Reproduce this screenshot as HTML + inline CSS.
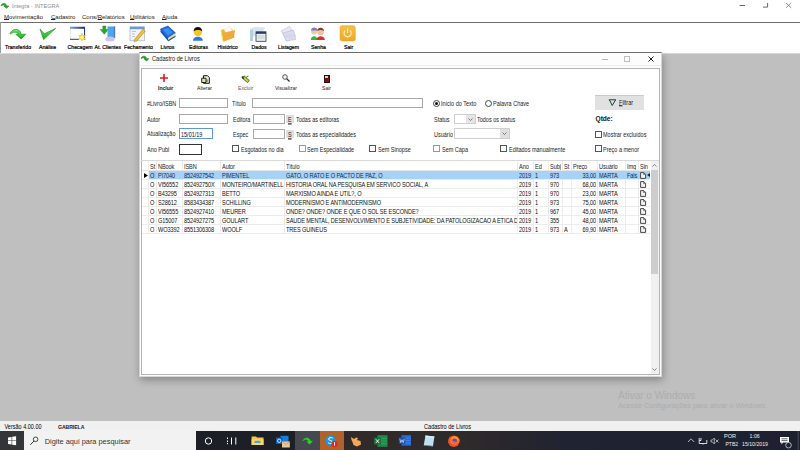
<!DOCTYPE html>
<html><head><meta charset="utf-8">
<style>
*{margin:0;padding:0;box-sizing:border-box}
html,body{width:800px;height:450px;overflow:hidden}
body{position:relative;background:#bfbfbf;font-family:"Liberation Sans",sans-serif;font-size:6px;color:#000}
.a{position:absolute}
.t{position:absolute;white-space:nowrap;line-height:1}
.u{text-decoration:underline;text-underline-offset:0.2px}
.f{transform:scaleY(1.15);transform-origin:0 50%}
.tb{font-weight:normal;font-size:5.2px;color:#000;-webkit-text-stroke:0.2px #000;transform:scaleY(1.1);transform-origin:0 50%}
.chk{position:absolute;width:7px;height:7px;border:1px solid #555;background:#fff}
.box{position:absolute;border:1px solid #a8a8a8;background:#fff}
.g{position:absolute;line-height:9px;height:9px;white-space:nowrap;overflow:hidden;font-size:5.6px;letter-spacing:-0.1px;color:#222;transform:scaleY(1.2);transform-origin:0 0}
</style></head><body>

<!-- ===== main window chrome ===== -->
<div class="a" style="left:0;top:0;width:800px;height:54px;background:#fff"></div>
<!-- title icon -->
<svg class="a" style="left:0;top:0" width="12" height="11" viewBox="0 0 12 11"><g transform="translate(-4,-11.2) scale(0.5)"><path d="M10,33.5 C11.5,29.5 17,27.5 20.5,31.8 L20.8,34.2 L25.8,34.3 L21.2,39 L15.8,34.3 L18.6,34.2 C16.5,31.8 13,31.5 10.6,34.2 Z" fill="#22b022" stroke="#0a6a0a" stroke-width="1"/></g></svg>
<div class="t" style="left:12px;top:4px;color:#8c8c8c;font-size:5.6px">Integra - INTEGRA</div>
<!-- window controls -->
<svg class="a" style="left:730px;top:0" width="70" height="12" viewBox="730 0 70 12">
<path d="M739.6,5.5 H745" stroke="#555" stroke-width="0.9"/>
<path d="M763,7.1 H767.6 V3" fill="none" stroke="#555" stroke-width="0.9"/>
<path d="M786,3 L791.2,7.9 M791.2,3 L786,7.9" stroke="#666" stroke-width="0.7"/>
</svg>
<!-- menu -->
<div class="t" style="left:4px;top:14px;color:#222"><span class="u">M</span>ovimentação</div>
<div class="t" style="left:51px;top:14px;color:#222"><span class="u">C</span>adastro</div>
<div class="t" style="left:82px;top:14px;color:#222">Cons/<span class="u">R</span>elatórios</div>
<div class="t" style="left:130px;top:14px;color:#222"><span class="u">U</span>tilitários</div>
<div class="t" style="left:162px;top:14px;color:#222"><span class="u">A</span>juda</div>

<!-- toolbar -->
<div class="a" style="left:0;top:22px;width:800px;height:1px;background:#6e6e6e"></div>
<div class="a" style="left:0;top:22px;width:1px;height:32px;background:#9a9a9a"></div>
<div class="a" style="left:0;top:53px;width:800px;height:1px;background:#d8d8d8"></div>

<!-- toolbar icons -->
<svg class="a" style="left:0;top:0" width="400" height="54" viewBox="0 0 400 54">
<defs>
<linearGradient id="gg" x1="0" y1="0" x2="0" y2="1"><stop offset="0" stop-color="#6ee86e"/><stop offset="1" stop-color="#14a814"/></linearGradient>
<linearGradient id="og" x1="0" y1="0" x2="0" y2="1"><stop offset="0" stop-color="#f6c046"/><stop offset="1" stop-color="#f0a828"/></linearGradient>
<linearGradient id="wb" x1="0" y1="0" x2="1" y2="0"><stop offset="0" stop-color="#8aa4d8"/><stop offset="1" stop-color="#102878"/></linearGradient>
</defs>
<!-- Transferir arrow -->
<path d="M10,33.5 C11.5,29.5 17,27.5 20.5,31.8 L20.8,34.2 L25.8,34.3 L21.2,39 L15.8,34.3 L18.6,34.2 C16.5,31.8 13,31.5 10.6,34.2 Z" fill="url(#gg)" stroke="#0c8a0c" stroke-width="0.6"/>
<!-- Analise check -->
<path d="M40,29 L44.3,33.8 L55.7,28.3 L43.6,39.6 Z" fill="url(#gg)" stroke="#0c8a0c" stroke-width="0.6"/>
<!-- Checagem window -->
<rect x="70.5" y="27" width="14.5" height="12.5" fill="#fff" stroke="#c8d4ee" stroke-width="0.5"/>
<rect x="70" y="26.8" width="15" height="2" fill="url(#wb)"/>
<rect x="84" y="27" width="1" height="12.5" fill="#2a3a90"/>
<rect x="70" y="38.8" width="9" height="1" fill="#2a3a90"/>
<path d="M82,33 L83,35.6 L85.8,35.2 L84,37.2 L85.8,39.3 L83,38.8 L82,41.2 L81,38.8 L78.2,39.3 L80,37.2 L78.2,35.2 L81,35.6 Z" fill="#f2dc3a" stroke="#d8b820" stroke-width="0.3"/>
<circle cx="82" cy="37.2" r="1.5" fill="#fff7a0"/>
<!-- At. Clientes -->
<path d="M100.2,29.5 L102.8,29.5 L102.8,26 L105.8,26 L105.8,29.5 L108.4,29.5 L104.3,34.2 Z" fill="#2aa82a" stroke="#117711" stroke-width="0.4"/>
<rect x="107.5" y="26.5" width="7.5" height="11.5" fill="#4aa8e8"/>
<rect x="113.8" y="26.5" width="1.4" height="11.5" fill="#5a78b8"/>
<ellipse cx="110" cy="39" rx="4.8" ry="2.5" fill="#cdc2ee"/>
<!-- Fechamento -->
<rect x="130" y="26.8" width="14.5" height="14" fill="#f2f4fa" stroke="#98a8c8" stroke-width="0.6"/>
<rect x="130" y="26.8" width="14.5" height="2.4" fill="#6a9ad8"/>
<path d="M132,31.5h4M132,34h3M132,36.5h3" stroke="#a0a0b0" stroke-width="0.6"/>
<path d="M134.5,39.5 L143,29 L145.3,31 L136.8,41 L134,41.5 Z" fill="#f2c040" stroke="#a07010" stroke-width="0.5"/>
<!-- Livros -->
<path d="M160.5,29 L168,26 L175.5,33 L168,38 Z" fill="#1e6ee0" stroke="#0a3e9a" stroke-width="0.6"/>
<path d="M163,29.5 L168,27.8 L172.5,32.5 L168,35.5 Z" fill="#3a90f0"/>
<path d="M160.5,29 L168,38 L168,41 L160.5,32 Z" fill="#1050c0"/>
<path d="M168,38 L175.5,33 L175.5,36 L168,41 Z" fill="#e8e478"/>
<path d="M168,40 L175.5,35.5 L175.5,37 L168,41.5 Z" fill="#1e5ec8"/>
<!-- Editoras person -->
<path d="M193,40.8 C193,35.5 202.8,35.5 202.8,40.8 Z" fill="#2e78d8"/>
<circle cx="197.9" cy="32" r="4.2" fill="#f6c628"/>
<path d="M193.6,31.2 C193.6,25.5 202.2,25.5 202.2,31.2 C200,29.5 196,29.5 193.6,31.2 Z" fill="#111"/>
<!-- Historico folder -->
<path d="M221,30 L225,29 L226,30 L232,28.5 L234.5,37.5 L223.5,41.4 Z" fill="#e8b830"/>
<path d="M224,29.5 L230,26.2 L233.5,33 L227,35.5 Z" fill="#fbfbf4" stroke="#d8d0b8" stroke-width="0.3"/>
<path d="M223,33 L235,30 L234,37.5 L223.5,41.4 Z" fill="#f0a838"/>
<path d="M221,30.5 L223.5,41.4 L222.5,41 L220.8,32 Z" fill="#f8d048"/>
<!-- Dados -->
<path d="M250,29 C252,27 256,26.5 260,27.5 L262,27 L265,28 L262,33 L250,38 Z" fill="#d6e4f4"/>
<rect x="250" y="30" width="3" height="11" fill="#b8cce4"/>
<rect x="256" y="31.8" width="10" height="9.5" fill="#e8ecf2" stroke="#2a3a4a" stroke-width="0.8"/>
<rect x="256" y="31.8" width="10" height="2" fill="#2a3a5a"/>
<path d="M257.5,36h7M257.5,38h7" stroke="#a0a8b8" stroke-width="0.5"/>
<!-- Listagem -->
<path d="M281,31 L289.5,26.2 L295.5,36 L287,41 Z" fill="#e8e8f6" stroke="#b4b4cc" stroke-width="0.5"/>
<path d="M283,33 L293.5,30 L295.8,39.5 L286,41 Z" fill="#dcdcf0" stroke="#b0b0c8" stroke-width="0.5"/>
<path d="M285,35h8M285.5,37h8" stroke="#c0c0dc" stroke-width="0.5"/>
<!-- Senha -->
<path d="M310.8,39.9 C310.8,35 317.5,35 317.5,39.9 Z" fill="#38b838"/>
<circle cx="314.2" cy="31.5" r="3" fill="#f0c8a0"/>
<path d="M311,30.5 C311,26.5 317.5,26.5 317.5,30.5 Z" fill="#7a7ad0"/>
<path d="M316.5,39.9 C316.5,35 324.8,35 324.8,39.9 Z" fill="#d83030"/>
<circle cx="320.6" cy="32" r="3.2" fill="#f0c0a0"/>
<path d="M317.2,31 C317.2,26.8 324,26.8 324,31 C322,29.8 319.5,29.8 317.2,31 Z" fill="#8a3a2a"/>
<!-- Sair -->
<rect x="340" y="25.7" width="15.3" height="15.2" rx="1.8" fill="url(#og)" stroke="#e0a020" stroke-width="0.5"/>
<path d="M345.3,30.5 A3.6,3.6 0 1 0 350,30.5" fill="none" stroke="#fff2c0" stroke-width="1.1"/>
<path d="M347.65,28.5 V33" stroke="#fff2c0" stroke-width="1.1"/>
</svg>

<div class="t tb" style="left:5px;top:45px">Transferido</div>
<div class="t tb" style="left:39px;top:45px">Análise</div>
<div class="t tb" style="left:67.5px;top:45px">Checagem</div>
<div class="t tb" style="left:94.5px;top:45px">At. Clientes</div>
<div class="t tb" style="left:124px;top:45px">Fechamento</div>
<div class="t tb" style="left:160.5px;top:45px">Livros</div>
<div class="t tb" style="left:189px;top:45px">Editoras</div>
<div class="t tb" style="left:217.5px;top:45px">Histórico</div>
<div class="t tb" style="left:251.5px;top:45px">Dados</div>
<div class="t tb" style="left:278px;top:45px">Listagem</div>
<div class="t tb" style="left:311px;top:45px">Senha</div>
<div class="t tb" style="left:344px;top:45px">Sair</div>

<!-- ===== status bar ===== -->
<div class="a" style="left:0;top:421px;width:800px;height:10px;background:#f0f0f0"></div>
<div class="t f" style="left:4.5px;top:425px;font-size:5.5px;color:#000">Versão 4.00.00</div>
<div class="t f" style="left:58px;top:425px;font-size:5.2px;font-weight:bold;color:#222;letter-spacing:-0.1px">GABRIELA</div>
<div class="t f" style="left:424px;top:425px;font-size:5.6px;color:#000">Cadastro de Livros</div>

<!-- watermark -->
<div class="t" style="left:618px;top:390.5px;font-size:10px;color:#adadad">Ativar o Windows</div>
<div class="t" style="left:618px;top:401.5px;font-size:7.3px;color:#adadad">Acesse Configurações para ativar o Windows.</div>

<!-- ===== taskbar ===== -->
<div class="a" style="left:0;top:431px;width:800px;height:19px;background:linear-gradient(90deg,#1b1e25 0%,#1c1f26 36%,#312a29 44%,#2f2a2b 58%,#202331 70%,#1c2030 100%)"></div>
<div class="a" style="left:0;top:431px;width:24px;height:19px;background:#333538"></div>
<div class="a" style="left:24px;top:431px;width:172px;height:19px;background:#f2f2f2"></div>
<svg class="a" style="left:0;top:431px" width="800" height="19" viewBox="0 431 800 19">
<!-- windows logo -->
<path d="M8,437.4 L11.6,436.9 V440.5 H8 Z M12.2,436.8 L16.1,436.2 V440.5 H12.2 Z M8,441.1 H11.6 V444.6 L8,444.1 Z M12.2,441.1 H16.1 V445.3 L12.2,444.7 Z" fill="#fff"/>
<!-- search -->
<circle cx="35.6" cy="439.3" r="2.3" fill="none" stroke="#222" stroke-width="0.8"/>
<path d="M34,441 L30.3,444.8" stroke="#222" stroke-width="0.9"/>
<!-- cortana -->
<circle cx="208.5" cy="441" r="3.2" fill="none" stroke="#fff" stroke-width="1"/>
<!-- task view -->
<path d="M227.5,437.5v1.5M227.5,440.5v1.5M227.5,443v1.2M231.5,437.5v7M235.8,437.5v7" stroke="#fff" stroke-width="1"/>
<!-- explorer -->
<path d="M251.6,436.5 H256 L257,437.6 H263.5 V445 H251.6 Z" fill="#f2c94c"/>
<rect x="251.6" y="439.3" width="11.9" height="5.7" fill="#f8d868"/>
<rect x="254.5" y="440.8" width="6" height="2.2" fill="#5aa0c8"/>
<!-- outlook -->
<rect x="280.5" y="435.8" width="8" height="8" fill="#1a7ed8"/>
<rect x="276" y="437.5" width="6.5" height="6.5" fill="#0f5fb8"/>
<circle cx="279.2" cy="440.8" r="1.7" fill="none" stroke="#fff" stroke-width="0.8"/>
<rect x="282" y="441.5" width="7.8" height="6" fill="#e8c898"/>
<path d="M282,441.5 L285.9,444.5 L289.8,441.5" fill="none" stroke="#b89060" stroke-width="0.6"/>
</svg>
<!-- active integra button -->
<div class="a" style="left:295px;top:431px;width:25px;height:19px;background:#45484e"></div>
<div class="a" style="left:320px;top:431px;width:24px;height:19px;background:#b0622c"></div>
<svg class="a" style="left:0;top:431px" width="800" height="19" viewBox="0 431 800 19">
<path d="M302.5,440.5 C304,437.5 308,436.5 310,439.5 L310.5,440.8 L313,441 L309.5,444.6 L306.3,441.3 L308.4,441.2 C307,439.5 304.5,439.3 303.2,441 Z" fill="#2ad42a" stroke="#119011" stroke-width="0.4"/>
<!-- skype -->
<circle cx="330.6" cy="440.5" r="5" fill="#1e9ae0"/>
<path d="M332.8,438.2 C331.2,437 328.4,437.6 328.6,439.2 C328.8,440.8 332.6,440.4 332.6,442.2 C332.6,443.8 329.6,444 328.2,442.8" fill="none" stroke="#fff" stroke-width="1"/>
<circle cx="334.5" cy="444" r="3.2" fill="#e02828"/>
<rect x="334.1" y="442.2" width="0.9" height="3.4" fill="#fff"/>
<!-- orange figure -->
<path d="M351,437 L354,439 L356,437.5 L358,438 L357,440 L360.5,441 L361,444.5 L357,446.5 L353.5,445 L352.5,442 L351.5,440 Z" fill="#f2a858"/>
<!-- excel -->
<rect x="377.5" y="435.2" width="10" height="11.6" fill="#1f8a4c"/>
<path d="M379,438.5h8M379,441h8M379,443.5h8" stroke="#33b06a" stroke-width="0.6"/>
<rect x="374" y="437.5" width="7" height="7" fill="#17703c"/>
<path d="M375.8,439.2 L379.2,443 M379.2,439.2 L375.8,443" stroke="#fff" stroke-width="0.9"/>
<!-- word -->
<rect x="401.5" y="435.2" width="9.5" height="10.4" fill="#2b6ad4"/>
<path d="M403,438h7.5M403,440.5h7.5M403,443h7.5" stroke="#4a90f0" stroke-width="0.6"/>
<rect x="398.8" y="437.3" width="6.5" height="6.5" fill="#1a4fae"/>
<path d="M399.8,438.8 L400.8,442.6 L402,439.8 L403.2,442.6 L404.2,438.8" fill="none" stroke="#fff" stroke-width="0.6"/>
<!-- notepad -->
<path d="M425.5,435.5 L434.4,436.5 L433,446 L423.8,445 Z" fill="#bfe0ee"/>
<path d="M425.5,435.5 L434.4,436.5 L434,438 L425.2,437 Z" fill="#d8eef8"/>
<path d="M423.8,445 L433,446 L432.8,446.5 L423.7,445.6Z" fill="#7ab0c8"/>
<!-- firefox -->
<circle cx="453.8" cy="441.2" r="5.8" fill="#f24e2a"/>
<circle cx="454.6" cy="440.4" r="4.2" fill="#ff9a1a"/>
<circle cx="454.6" cy="441" r="2.6" fill="#7a3fb8"/>
<path d="M449,437 C450,440 452,443 456,444 C459,444 460,441 459.5,438.5 C458.5,442 455,442.5 453,441 Z" fill="#ff6a1a"/>
<!-- tray -->
<path d="M688,442 L691,438.8 L694.2,442" fill="none" stroke="#ddd" stroke-width="0.8"/>
<path d="M699.2,437.9 V443.5 M701,437.9 V440.5 H699.2 M699.2,443.5 H706.8 V440 M703,443.5 V444.5" fill="none" stroke="#eee" stroke-width="0.9"/>
<path d="M711,440 H712.5 L714.3,438 V444 L712.5,442 H711 Z" fill="none" stroke="#ddd" stroke-width="0.7"/>
<path d="M715.5,439.5 L718.5,442.5 M718.5,439.5 L715.5,442.5" stroke="#ddd" stroke-width="0.7"/>
<!-- notifications -->
<path d="M780,437 H789 V442.5 H783 L781.5,444.5 V442.5 H780 Z" fill="#fff"/>
<path d="M781.5,438.8h6M781.5,440.6h6" stroke="#1c2030" stroke-width="0.7"/>
<circle cx="788.5" cy="445.2" r="2.8" fill="#1c2030" stroke="#eee" stroke-width="0.7"/>
<rect x="797.8" y="431" width="0.7" height="19" fill="#5a5e68"/>
</svg>
<div class="t" style="left:724px;top:433.5px;font-size:5.6px;color:#eee">POR</div>
<div class="t" style="left:725.5px;top:442px;font-size:5px;color:#eee">PTB2</div>
<div class="t" style="left:749.5px;top:433.5px;font-size:5.3px;color:#eee">1:06</div>
<div class="t" style="left:742px;top:442px;font-size:5.2px;color:#eee">15/10/2019</div>
<div class="t" style="left:44.7px;top:437.5px;font-size:7.4px;color:#333">Digite aqui para pesquisar</div>

<!-- ===== MDI child ===== -->
<div class="a" style="left:139px;top:52px;width:523px;height:325px;background:#fcfcfc;border:1px solid #d6d6d6;border-top:1px solid #6a6a6a;box-shadow:1px 3px 8px rgba(0,0,0,.3);clip-path:inset(0 -20px -20px -20px)"></div>
<div class="a" style="left:140px;top:65px;width:521px;height:1px;background:#ececec"></div>
<svg class="a" style="left:136px;top:48px" width="16" height="16" viewBox="0 0 16 16"><g transform="translate(0,-6.45) scale(0.5)"><path d="M10,33.5 C11.5,29.5 17,27.5 20.5,31.8 L20.8,34.2 L25.8,34.3 L21.2,39 L15.8,34.3 L18.6,34.2 C16.5,31.8 13,31.5 10.6,34.2 Z" fill="#22b022" stroke="#0a6a0a" stroke-width="1"/></g></svg>
<div class="t f" style="left:152px;top:57px;font-size:5.7px;color:#1a1a1a">Cadastro de Livros</div>
<div class="a" style="left:602px;top:59px;width:6px;height:1px;background:#b8b8b8"></div>
<div class="a" style="left:624px;top:56px;width:6px;height:6px;border:1px solid #c0c0c0"></div>
<svg class="a" style="left:647.5px;top:55.5px" width="6" height="6" viewBox="0 0 6 6"><path d="M0.5 0.5L5.5 5.5M5.5 0.5L0.5 5.5" stroke="#222" stroke-width="1"/></svg>
<!-- client -->
<div class="a" style="left:141px;top:68px;width:519px;height:307px;background:#fff;border:1px solid #b4b4b4"></div>
<!-- child toolbar -->
<svg class="a" style="left:160px;top:74px" width="8" height="8" viewBox="0 0 8 8"><path d="M4 0V8M0 4H8" stroke="#e01818" stroke-width="1.6"/></svg>
<svg class="a" style="left:200.5px;top:74.5px" width="9" height="9" viewBox="0 0 9 9"><path d="M2.5 0.7H6.5L8.3 2.5V8.3H2.5Z" fill="#f0f0d8" stroke="#111" stroke-width="1"/><path d="M0.7 3.2H5V7.5H0.7Z" fill="#d8e890" stroke="#111" stroke-width="0.9"/><path d="M6 4.5V7" stroke="#222" stroke-width="0.8"/></svg>
<svg class="a" style="left:241px;top:74.5px" width="9" height="8" viewBox="0 0 9 8"><path d="M1 3L3 0.8L8.3 5.5L6.5 7.5Z" fill="#c8d040" stroke="#3a4a20" stroke-width="0.8"/><path d="M0.8 1.5L3 3.5" stroke="#1a3a1a" stroke-width="1.2"/><path d="M5 2.5L7.5 1" stroke="#2a8a2a" stroke-width="1"/></svg>
<svg class="a" style="left:282px;top:74px" width="8" height="8" viewBox="0 0 8 8"><circle cx="3" cy="3" r="2.3" fill="#f4f4f4" stroke="#444" stroke-width="0.9"/><path d="M4.6 4.6L7.5 7.5" stroke="#222" stroke-width="1.2"/></svg>
<div class="a" style="left:323.5px;top:75px;width:6px;height:7.5px;background:#7a1010;border:0.7px solid #3a0a0a"></div><div class="a" style="left:325px;top:76px;width:2.5px;height:2px;background:#b8e0c8"></div>
<div class="t" style="left:158px;top:86px;font-size:5.1px;font-weight:bold;color:#111">Incluir</div>
<div class="t" style="left:197px;top:86px;font-size:5.1px;color:#111">Alterar</div>
<div class="t" style="left:238px;top:86px;font-size:5.1px;color:#5a5a5a">Excluir</div>
<div class="t" style="left:275px;top:86px;font-size:5.1px;color:#222">Visualizar</div>
<div class="t" style="left:322px;top:86px;font-size:5.1px;color:#222">Sair</div>
<!-- form -->
<div class="t f" style="left:147px;top:102px;font-size:5.5px;color:#222">#Livro/ISBN</div>
<div class="box" style="left:179px;top:98px;width:49px;height:10px"></div>
<div class="t f" style="left:232px;top:102px;font-size:5.5px;color:#222">Título</div>
<div class="box" style="left:252px;top:98px;width:171px;height:10px"></div>
<div class="a" style="left:433px;top:100px;width:7px;height:7px;border:0.8px solid #444;border-radius:50%;background:#fff"></div>
<div class="a" style="left:435px;top:102px;width:3px;height:3px;border-radius:50%;background:#111"></div>
<div class="t f" style="left:441px;top:102px;font-size:5.5px;color:#222">Início do Texto</div>
<div class="a" style="left:485px;top:100px;width:7px;height:7px;border:0.8px solid #444;border-radius:50%;background:#fff"></div>
<div class="t f" style="left:493px;top:102px;font-size:5.5px;color:#222">Palavra Chave</div>
<div class="a" style="left:595px;top:95px;width:49px;height:15px;background:#e1e1e1;border-top:1px solid #cacaca"></div>
<svg class="a" style="left:608px;top:99px" width="9" height="7" viewBox="0 0 9 7"><path d="M0.8,0.8 H8 M1.5,1 L4.2,6.5 L7.5,1" fill="none" stroke="#1c3c3c" stroke-width="1"/></svg>
<div class="t f" style="left:619px;top:101px;font-size:5.5px;color:#222"><span class="u">F</span>iltrar</div>

<div class="t f" style="left:147px;top:118px;font-size:5.5px;color:#222">Autor</div>
<div class="box" style="left:179px;top:114px;width:49px;height:10px"></div>
<div class="t f" style="left:233px;top:118px;font-size:5.5px;color:#222">Editora</div>
<div class="box" style="left:253px;top:114px;width:32px;height:10px"></div>
<div class="a" style="left:286px;top:115px;width:8px;height:8px;background:#e0e0e0"></div>
<div class="t f" style="left:288px;top:118px;font-size:5.5px;color:#222;text-decoration:underline">E</div>
<div class="t f" style="left:296px;top:118px;font-size:5.5px;color:#222">Todas as editoras</div>
<div class="t f" style="left:434px;top:118px;font-size:5.5px;color:#222">Status</div>
<div class="box" style="left:454px;top:114px;width:22px;height:10px;border-color:#cfcfcf"></div>
<div class="a" style="left:466px;top:115px;width:9px;height:8px;background:#e5e5e5"></div>
<svg class="a" style="left:468px;top:118px" width="5" height="3" viewBox="0 0 5 3"><path d="M0.5 0.5L2.5 2.5L4.5 0.5" fill="none" stroke="#555" stroke-width="0.7"/></svg>
<div class="t f" style="left:477px;top:118px;font-size:5.5px;color:#222">Todos os status</div>
<div class="t" style="left:595.5px;top:115.5px;font-size:6.6px;font-weight:bold;color:#111">Qtde:</div>

<div class="t f" style="left:147px;top:132px;font-size:5.5px;color:#222">Atualização</div>
<div class="a" style="left:179px;top:128px;width:34px;height:11px;border:1px solid #5d9ad0;background:#fff"></div>
<div class="t f" style="left:181px;top:133px;font-size:5.5px;color:#111">15/01/19</div>
<div class="t f" style="left:233px;top:133px;font-size:5.5px;color:#222">Espec</div>
<div class="box" style="left:253px;top:129px;width:32px;height:10px"></div>
<div class="a" style="left:286px;top:130px;width:8px;height:8px;background:#e0e0e0"></div>
<div class="t f" style="left:288px;top:133px;font-size:5.5px;color:#222;text-decoration:underline">S</div>
<div class="t f" style="left:296px;top:133px;font-size:5.5px;color:#222">Todas as especialidades</div>
<div class="t f" style="left:434px;top:133px;font-size:5.5px;color:#222">Usuário</div>
<div class="box" style="left:454px;top:128px;width:56px;height:11px;border-color:#cfcfcf"></div>
<div class="a" style="left:500px;top:129px;width:9px;height:9px;background:#e0e0e0"></div>
<svg class="a" style="left:502px;top:132px" width="5" height="3" viewBox="0 0 5 3"><path d="M0.5 0.5L2.5 2.5L4.5 0.5" fill="none" stroke="#555" stroke-width="0.7"/></svg>
<div class="chk" style="left:595px;top:131px"></div>
<div class="t f" style="left:603px;top:133px;font-size:5.5px;color:#222">Mostrar excluídos</div>

<div class="t f" style="left:147px;top:148px;font-size:5.5px;color:#222">Ano Publ</div>
<div class="a" style="left:179px;top:144px;width:23px;height:11px;border:1px solid #333;background:#fff"></div>
<div class="chk" style="left:232px;top:145px"></div>
<div class="t f" style="left:241px;top:148px;font-size:5.5px;color:#222">Esgotados no dia</div>
<div class="chk" style="left:299px;top:145px;border-color:#999"></div>
<div class="t f" style="left:307px;top:148px;font-size:5.5px;color:#222">Sem Especialidade</div>
<div class="chk" style="left:369px;top:145px"></div>
<div class="t f" style="left:378px;top:148px;font-size:5.5px;color:#222">Sem Sinopse</div>
<div class="chk" style="left:433px;top:145px;border-color:#999"></div>
<div class="t f" style="left:442px;top:148px;font-size:5.5px;color:#222">Sem Capa</div>
<div class="chk" style="left:500px;top:145px"></div>
<div class="t f" style="left:509px;top:148px;font-size:5.5px;color:#222">Editados manualmente</div>
<div class="chk" style="left:595px;top:145px"></div>
<div class="t f" style="left:603px;top:148px;font-size:5.5px;color:#222">Preço a menor</div>

<!-- grid -->
<div class="a" style="left:650.5px;top:161px;width:8.5px;height:213px;background:#f0f0f0"></div>
<div class="a" style="left:651px;top:170px;width:7px;height:104px;background:#cdcdcd"></div>
<svg class="a" style="left:652px;top:164px" width="5" height="3" viewBox="0 0 5 3"><path d="M0.5 2.5L2.5 0.5L4.5 2.5" fill="none" stroke="#555" stroke-width="0.7"/></svg>
<svg class="a" style="left:652px;top:368px" width="5" height="3" viewBox="0 0 5 3"><path d="M0.5 0.5L2.5 2.5L4.5 0.5" fill="none" stroke="#555" stroke-width="0.7"/></svg>
<div class="a" style="left:141px;top:160px;width:518px;height:1px;background:#d9d9d9"></div>
<div class="a" style="left:142px;top:161px;width:508px;height:9px;background:#fff"></div>
<div class="a" style="left:148px;top:161px;width:1px;height:72px;background:#ececec"></div>
<div class="g" style="left:150px;top:161.5px;width:6px;color:#222">St</div>
<div class="a" style="left:156px;top:161px;width:1px;height:72px;background:#ececec"></div>
<div class="g" style="left:158px;top:161.5px;width:24px;color:#222">NBook</div>
<div class="a" style="left:182px;top:161px;width:1px;height:72px;background:#ececec"></div>
<div class="g" style="left:184px;top:161.5px;width:36px;color:#222">ISBN</div>
<div class="a" style="left:220px;top:161px;width:1px;height:72px;background:#ececec"></div>
<div class="g" style="left:222px;top:161.5px;width:62px;color:#222">Autor</div>
<div class="a" style="left:284px;top:161px;width:1px;height:72px;background:#ececec"></div>
<div class="g" style="left:286px;top:161.5px;width:231px;color:#222">Título</div>
<div class="a" style="left:517px;top:161px;width:1px;height:72px;background:#ececec"></div>
<div class="g" style="left:519px;top:161.5px;width:14px;color:#222">Ano</div>
<div class="a" style="left:533px;top:161px;width:1px;height:72px;background:#ececec"></div>
<div class="g" style="left:535px;top:161.5px;width:13px;color:#222">Ed</div>
<div class="a" style="left:548px;top:161px;width:1px;height:72px;background:#ececec"></div>
<div class="g" style="left:550px;top:161.5px;width:12px;color:#222">Subj</div>
<div class="a" style="left:562px;top:161px;width:1px;height:72px;background:#ececec"></div>
<div class="g" style="left:564px;top:161.5px;width:7px;color:#222">St</div>
<div class="a" style="left:571px;top:161px;width:1px;height:72px;background:#ececec"></div>
<div class="g" style="left:573px;top:161.5px;width:24px;color:#222">Preço</div>
<div class="a" style="left:597px;top:161px;width:1px;height:72px;background:#ececec"></div>
<div class="g" style="left:599px;top:161.5px;width:26px;color:#222">Usuário</div>
<div class="a" style="left:625px;top:161px;width:1px;height:72px;background:#ececec"></div>
<div class="g" style="left:627px;top:161.5px;width:11px;color:#222">Img</div>
<div class="a" style="left:638px;top:161px;width:1px;height:72px;background:#ececec"></div>
<div class="g" style="left:640px;top:161.5px;width:10px;color:#222">Sin</div>
<div class="a" style="left:142px;top:170px;width:508px;height:1px;background:#e6e6e6"></div>
<div class="a" style="left:149px;top:171px;width:501px;height:8px;background:#a6d2f7"></div>
<div class="a" style="left:149px;top:171px;width:7px;height:8px;background:#9cc8ee"></div>
<svg class="a" style="left:144px;top:173px" width="4" height="5" viewBox="0 0 4 5"><path d="M0 0L4 2.5L0 5Z" fill="#000"/></svg>
<div class="a" style="left:142px;top:179px;width:508px;height:1px;background:#ececec"></div>
<div class="g" style="left:150px;top:171px;width:6px;color:#0f2a50">O</div>
<div class="g" style="left:158px;top:171px;width:24px;color:#0f2a50">PI7040</div>
<div class="g" style="left:184px;top:171px;width:36px;color:#0f2a50">8524927542</div>
<div class="g" style="left:222px;top:171px;width:62px;color:#0f2a50">PIMENTEL</div>
<div class="g" style="left:286px;top:171px;width:231px;color:#0f2a50">GATO, O RATO E O PACTO DE PAZ, O</div>
<div class="g" style="left:519px;top:171px;width:14px;color:#0f2a50">2019</div>
<div class="g" style="left:535px;top:171px;width:13px;color:#0f2a50">1</div>
<div class="g" style="left:550px;top:171px;width:12px;color:#0f2a50">973</div>
<div class="g" style="left:571px;top:171px;width:25px;text-align:right;color:#0f2a50">33,00</div>
<div class="g" style="left:599px;top:171px;width:26px;color:#0f2a50">MARTA</div>
<div class="g" style="left:627px;top:171px;width:11px;color:#0f2a50">Fals</div>
<svg class="a" style="left:640px;top:172px" width="7" height="7" viewBox="0 0 7 7"><path d="M0.6 0.6H3.8L5.6 2.4V6.4H0.6Z" fill="#f4f4f4" stroke="#333" stroke-width="0.9"/><path d="M3.6 0.8V2.6H5.4" fill="none" stroke="#333" stroke-width="0.6"/></svg>
<svg class="a" style="left:647px;top:173px" width="3" height="4" viewBox="0 0 3 4"><path d="M3 0L0 2L3 4Z" fill="#1a2a40"/></svg>
<div class="a" style="left:142px;top:188px;width:508px;height:1px;background:#ececec"></div>
<div class="g" style="left:150px;top:180px;width:6px;color:#111">O</div>
<div class="g" style="left:158px;top:180px;width:24px;color:#111">VI56552</div>
<div class="g" style="left:184px;top:180px;width:36px;color:#111">852492750X</div>
<div class="g" style="left:222px;top:180px;width:62px;color:#111">MONTEIRO/MARTINELL</div>
<div class="g" style="left:286px;top:180px;width:231px;color:#111">HISTORIA ORAL NA PESQUISA EM SERVICO SOCIAL, A</div>
<div class="g" style="left:519px;top:180px;width:14px;color:#111">2019</div>
<div class="g" style="left:535px;top:180px;width:13px;color:#111">1</div>
<div class="g" style="left:550px;top:180px;width:12px;color:#111">970</div>
<div class="g" style="left:571px;top:180px;width:25px;text-align:right;color:#111">68,00</div>
<div class="g" style="left:599px;top:180px;width:26px;color:#111">MARTA</div>
<svg class="a" style="left:640px;top:181px" width="7" height="7" viewBox="0 0 7 7"><path d="M0.6 0.6H3.8L5.6 2.4V6.4H0.6Z" fill="#f4f4f4" stroke="#333" stroke-width="0.9"/><path d="M3.6 0.8V2.6H5.4" fill="none" stroke="#333" stroke-width="0.6"/></svg>
<div class="a" style="left:142px;top:197px;width:508px;height:1px;background:#ececec"></div>
<div class="g" style="left:150px;top:189px;width:6px;color:#111">O</div>
<div class="g" style="left:158px;top:189px;width:24px;color:#111">B43295</div>
<div class="g" style="left:184px;top:189px;width:36px;color:#111">8524927313</div>
<div class="g" style="left:222px;top:189px;width:62px;color:#111">BETTO</div>
<div class="g" style="left:286px;top:189px;width:231px;color:#111">MARXISMO AINDA E UTIL?, O</div>
<div class="g" style="left:519px;top:189px;width:14px;color:#111">2019</div>
<div class="g" style="left:535px;top:189px;width:13px;color:#111">1</div>
<div class="g" style="left:550px;top:189px;width:12px;color:#111">970</div>
<div class="g" style="left:571px;top:189px;width:25px;text-align:right;color:#111">23,00</div>
<div class="g" style="left:599px;top:189px;width:26px;color:#111">MARTA</div>
<svg class="a" style="left:640px;top:190px" width="7" height="7" viewBox="0 0 7 7"><path d="M0.6 0.6H3.8L5.6 2.4V6.4H0.6Z" fill="#f4f4f4" stroke="#333" stroke-width="0.9"/><path d="M3.6 0.8V2.6H5.4" fill="none" stroke="#333" stroke-width="0.6"/></svg>
<div class="a" style="left:142px;top:206px;width:508px;height:1px;background:#ececec"></div>
<div class="g" style="left:150px;top:198px;width:6px;color:#111">O</div>
<div class="g" style="left:158px;top:198px;width:24px;color:#111">S28612</div>
<div class="g" style="left:184px;top:198px;width:36px;color:#111">8583434387</div>
<div class="g" style="left:222px;top:198px;width:62px;color:#111">SCHILLING</div>
<div class="g" style="left:286px;top:198px;width:231px;color:#111">MODERNISMO E ANTIMODERNISMO</div>
<div class="g" style="left:519px;top:198px;width:14px;color:#111">2019</div>
<div class="g" style="left:535px;top:198px;width:13px;color:#111">1</div>
<div class="g" style="left:550px;top:198px;width:12px;color:#111">973</div>
<div class="g" style="left:571px;top:198px;width:25px;text-align:right;color:#111">75,00</div>
<div class="g" style="left:599px;top:198px;width:26px;color:#111">MARTA</div>
<svg class="a" style="left:640px;top:199px" width="7" height="7" viewBox="0 0 7 7"><path d="M0.6 0.6H3.8L5.6 2.4V6.4H0.6Z" fill="#f4f4f4" stroke="#333" stroke-width="0.9"/><path d="M3.6 0.8V2.6H5.4" fill="none" stroke="#333" stroke-width="0.6"/></svg>
<div class="a" style="left:142px;top:215px;width:508px;height:1px;background:#ececec"></div>
<div class="g" style="left:150px;top:207px;width:6px;color:#111">O</div>
<div class="g" style="left:158px;top:207px;width:24px;color:#111">VI56555</div>
<div class="g" style="left:184px;top:207px;width:36px;color:#111">8524927410</div>
<div class="g" style="left:222px;top:207px;width:62px;color:#111">MEURER</div>
<div class="g" style="left:286px;top:207px;width:231px;color:#111">ONDE? ONDE? ONDE E QUE O SOL SE ESCONDE?</div>
<div class="g" style="left:519px;top:207px;width:14px;color:#111">2019</div>
<div class="g" style="left:535px;top:207px;width:13px;color:#111">1</div>
<div class="g" style="left:550px;top:207px;width:12px;color:#111">967</div>
<div class="g" style="left:571px;top:207px;width:25px;text-align:right;color:#111">45,00</div>
<div class="g" style="left:599px;top:207px;width:26px;color:#111">MARTA</div>
<svg class="a" style="left:640px;top:208px" width="7" height="7" viewBox="0 0 7 7"><path d="M0.6 0.6H3.8L5.6 2.4V6.4H0.6Z" fill="#f4f4f4" stroke="#333" stroke-width="0.9"/><path d="M3.6 0.8V2.6H5.4" fill="none" stroke="#333" stroke-width="0.6"/></svg>
<div class="a" style="left:142px;top:224px;width:508px;height:1px;background:#ececec"></div>
<div class="g" style="left:150px;top:216px;width:6px;color:#111">O</div>
<div class="g" style="left:158px;top:216px;width:24px;color:#111">G15007</div>
<div class="g" style="left:184px;top:216px;width:36px;color:#111">8524927275</div>
<div class="g" style="left:222px;top:216px;width:62px;color:#111">GOULART</div>
<div class="g" style="left:286px;top:216px;width:231px;color:#111">SAUDE MENTAL, DESENVOLVIMENTO E SUBJETIVIDADE: DA PATOLOGIZACAO A ETICA D</div>
<div class="g" style="left:519px;top:216px;width:14px;color:#111">2019</div>
<div class="g" style="left:535px;top:216px;width:13px;color:#111">1</div>
<div class="g" style="left:550px;top:216px;width:12px;color:#111">355</div>
<div class="g" style="left:571px;top:216px;width:25px;text-align:right;color:#111">48,00</div>
<div class="g" style="left:599px;top:216px;width:26px;color:#111">MARTA</div>
<svg class="a" style="left:640px;top:217px" width="7" height="7" viewBox="0 0 7 7"><path d="M0.6 0.6H3.8L5.6 2.4V6.4H0.6Z" fill="#f4f4f4" stroke="#333" stroke-width="0.9"/><path d="M3.6 0.8V2.6H5.4" fill="none" stroke="#333" stroke-width="0.6"/></svg>
<div class="a" style="left:142px;top:233px;width:508px;height:1px;background:#ececec"></div>
<div class="g" style="left:150px;top:225px;width:6px;color:#111">O</div>
<div class="g" style="left:158px;top:225px;width:24px;color:#111">WO3392</div>
<div class="g" style="left:184px;top:225px;width:36px;color:#111">8551306308</div>
<div class="g" style="left:222px;top:225px;width:62px;color:#111">WOOLF</div>
<div class="g" style="left:286px;top:225px;width:231px;color:#111">TRES GUINEUS</div>
<div class="g" style="left:519px;top:225px;width:14px;color:#111">2019</div>
<div class="g" style="left:535px;top:225px;width:13px;color:#111">1</div>
<div class="g" style="left:550px;top:225px;width:12px;color:#111">973</div>
<div class="g" style="left:564px;top:225px;width:7px;color:#111">A</div>
<div class="g" style="left:571px;top:225px;width:25px;text-align:right;color:#111">69,90</div>
<div class="g" style="left:599px;top:225px;width:26px;color:#111">MARTA</div>
<svg class="a" style="left:640px;top:226px" width="7" height="7" viewBox="0 0 7 7"><path d="M0.6 0.6H3.8L5.6 2.4V6.4H0.6Z" fill="#f4f4f4" stroke="#333" stroke-width="0.9"/><path d="M3.6 0.8V2.6H5.4" fill="none" stroke="#333" stroke-width="0.6"/></svg>

</body></html>
